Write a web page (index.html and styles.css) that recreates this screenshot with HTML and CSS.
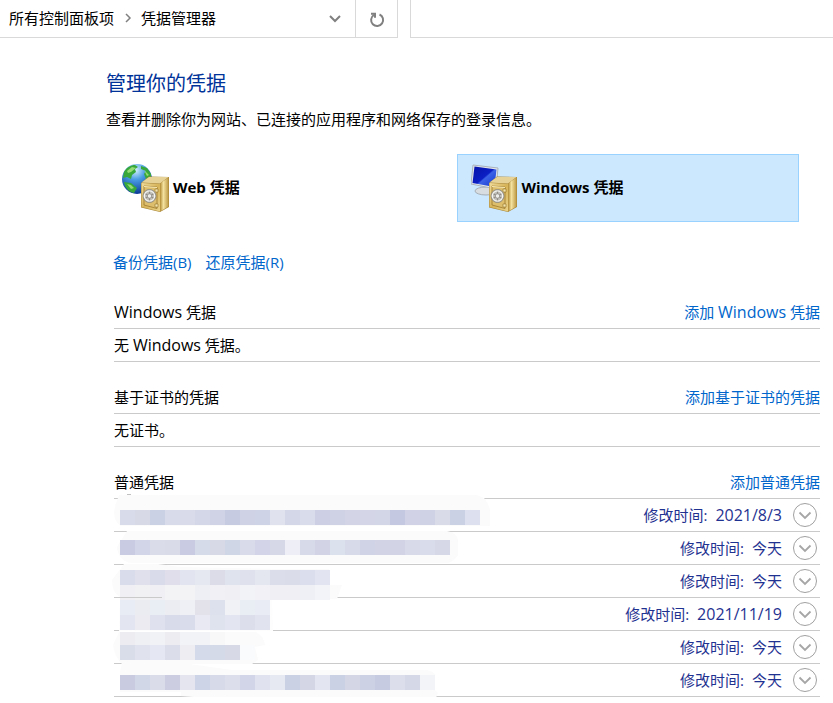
FILE: index.html
```html
<!DOCTYPE html>
<html lang="zh-CN">
<head>
<meta charset="utf-8">
<title>凭据管理器</title>
<link rel="stylesheet" href="styles.css">
</head>
<body>
<svg class="defs" width="0" height="0" aria-hidden="true">
  <defs>
    <linearGradient id="gold" x1="0" y1="0" x2="1" y2="1"><stop offset="0" stop-color="#f0dc9c"/><stop offset=".5" stop-color="#d6b358"/><stop offset="1" stop-color="#ead38a"/></linearGradient>
    <linearGradient id="goldSide" x1="0" y1="0" x2="1" y2="0"><stop offset="0" stop-color="#b18a32"/><stop offset=".4" stop-color="#f4e2a0"/><stop offset="1" stop-color="#bd9a44"/></linearGradient>
    <linearGradient id="screen" x1="0" y1="0" x2="1" y2="1"><stop offset="0" stop-color="#0713a8"/><stop offset=".5" stop-color="#0b1fc4"/><stop offset=".55" stop-color="#3b62e6"/><stop offset="1" stop-color="#1336d0"/></linearGradient>
    <radialGradient id="ocean" cx=".45" cy=".2" r=".8"><stop offset="0" stop-color="#d4f1fd"/><stop offset=".4" stop-color="#4a9de3"/><stop offset="1" stop-color="#0b3a96"/></radialGradient>
    <symbol id="safe" viewBox="0 0 30 38">
      <path d="M1 8 9 1.500 29 2v30l-9 5L1 32.500z" fill="#a88638"/>
      <path d="M1.500 7.500 9 2h19.500L20 8.500z" fill="#e6d297"/>
      <path d="M20 8.500 28.500 2.500v29L20 36.500z" fill="url(#goldSide)"/>
      <path d="M1.500 8 20 9v27.500L1.500 32z" fill="url(#gold)"/>
      <path d="M4 11 17 12v21.500L4 30z" fill="#dcbe6c" stroke="#9d7a2e" stroke-width=".8"/>
      <path d="M4 11.500 17 12.500" stroke="#f8e9b3" fill="none"/>
      <path d="M15 14h3v3h-3zM15 29h3v3h-3z" fill="#f3e3a8" stroke="#80601f" stroke-width=".5"/>
      <circle cx="9.500" cy="21" r="6.500" fill="#c2c1bc" stroke="#85837e" stroke-width=".8"/>
      <path d="M9.500 15v12M4 18l11 6M15 18l-11 6" stroke="#8f8b84" stroke-width="1.200"/>
      <circle cx="9.500" cy="21" r="5.200" fill="none" stroke="#f5f5f2" stroke-width="1.200"/>
      <circle cx="9.500" cy="21" r="2.200" fill="#eeeeec" stroke="#8c8983" stroke-width=".7"/>
    </symbol>
    <symbol id="expand" viewBox="0 0 24 24"><circle cx="12" cy="12" r="11.500" fill="#fff" stroke="#a0a0a0"/><path d="m6.500 9.500 5.500 5.500 5.500-5.500" fill="none" stroke="#a6a6a6" stroke-width="1.800"/></symbol>
  </defs>
</svg>
<header class="topbar">
  <nav class="address" aria-label="地址">
    <a href="#">所有控制面板项</a>
    <svg class="sep" width="8" height="12" viewBox="0 0 8 12"><path d="m2 2 4 4-4 4"/></svg>
    <a href="#">凭据管理器</a>
    <button class="drop" aria-label="以前的位置"><svg width="14" height="10" viewBox="0 0 14 10"><path d="m2 2 5 5 5-5"/></svg></button>
    <button class="refresh" aria-label="刷新"><svg width="16" height="18" viewBox="0 0 16 18"><path d="M10.500 4.500A6 6 0 1 1 4.800 5M2 3.800h4v4"/></svg></button>
  </nav>
  <input class="search" type="search" aria-label="搜索控制面板">
</header>
<main class="page">
  <h1>管理你的凭据</h1>
  <p class="intro">查看并删除你为网站、已连接的应用程序和网络保存的登录信息。</p>
  <div class="vaults">
    <button class="vault">
      <svg width="50" height="52" viewBox="0 0 50 52">
        <circle cx="17" cy="17" r="15" fill="url(#ocean)"/>
        <path d="M4 10C7 5 11 3 15 3l3 2-3 2 1 3-4 3-1 4-4-2-4 1zM4 20l7 1 6 5-3 5C9 30 5 26 4 20zM21 4l6 2 4 6v7l-5-2-2-5 2-3-5-2z" fill="#38a83b"/>
        <path d="M7 9 12 5l4 1-5 4-3 1zM24 8l5 5-2 1zM7 22l4 1 3 3-3 1z" fill="#95dc75"/>
        <use href="#safe" x="20" y="13" width="30" height="38"/>
      </svg>
      <span>Web 凭据</span>
    </button>
    <button class="vault selected">
      <svg width="48" height="52" viewBox="1 0 48 52">
        <path d="M13 24h8l1 5h-8z" fill="#aab1b8"/><ellipse cx="16" cy="29" rx="11" ry="4" fill="#d8dde1" stroke="#a7afb6"/>
        <path d="m3 3 25 3-2 21L1 22z" fill="#e4e8eb" stroke="#a9b3bd"/>
        <path d="m4.500 4.500 22 3-2 17.500L2.500 21z" fill="url(#screen)"/>
        <use href="#safe" x="18" y="13" width="30" height="38"/>
      </svg>
      <span>Windows 凭据</span>
    </button>
  </div>
  <div class="actions"><a href="#">备份凭据(B)</a><a href="#">还原凭据(R)</a></div>
  <section>
    <div class="head"><h2><span class="latin">Windows</span> 凭据</h2><a href="#">添加 <span class="latin">Windows</span> 凭据</a></div>
    <p class="empty">无 <span class="latin">Windows</span> 凭据。</p>
  </section>
  <section>
    <div class="head"><h2>基于证书的凭据</h2><a href="#">添加基于证书的凭据</a></div>
    <p class="empty">无证书。</p>
  </section>
  <section class="generic">
    <div class="head"><h2>普通凭据</h2><a href="#">添加普通凭据</a></div>
    <ul>
      <li><span>修改时间:</span><span class="latin">2021/8/3</span><button aria-label="展开"><svg width="24" height="24"><use href="#expand"/></svg></button></li>
      <li><span>修改时间:</span><span>今天</span><button aria-label="展开"><svg width="24" height="24"><use href="#expand"/></svg></button></li>
      <li><span>修改时间:</span><span>今天</span><button aria-label="展开"><svg width="24" height="24"><use href="#expand"/></svg></button></li>
      <li><span>修改时间:</span><span class="latin">2021/11/19</span><button aria-label="展开"><svg width="24" height="24"><use href="#expand"/></svg></button></li>
      <li><span>修改时间:</span><span>今天</span><button aria-label="展开"><svg width="24" height="24"><use href="#expand"/></svg></button></li>
      <li><span>修改时间:</span><span>今天</span><button aria-label="展开"><svg width="24" height="24"><use href="#expand"/></svg></button></li>
    </ul>
    <svg class="mosaic" width="380" height="213" viewBox="112 490 380 213" aria-hidden="true"></svg>
  </section>
</main>
<script src="mosaic.js"></script>
</body>
</html>
```
FILE: styles.css
```css
* { box-sizing: border-box; }
body {
  margin: 0;
  background: #fff;
  color: #000;
  font: 15px/20px "Open Sans", "Noto Sans CJK SC", sans-serif;
}
h1, h2, p, ul { margin: 0; padding: 0; font-weight: 400; }
a { color: #0066cc; text-decoration: none; }
button { border: 0; padding: 0; background: none; font: inherit; color: inherit; }
button svg { display: block; }
.defs { position: absolute; }
.latin { font-size: 16px; }

.topbar { display: flex; gap: 12px; height: 38px; }
.address {
  display: flex;
  align-items: center;
  width: 398px;
  padding-left: 9px;
  border: solid #d9d9d9;
  border-width: 0 1px 1px 0;
}
.address a { color: #000; padding-bottom: 2px; }
.sep { margin: 0 9px 2px 10px; }
.address path { fill: none; stroke: #808080; stroke-width: 2; }
.address .sep path { stroke-width: 1.5; }
.drop { margin-left: auto; padding: 0 13px; }
.refresh { align-self: stretch; width: 42px; padding-left: 13px; border-left: 1px solid #d9d9d9; }
.search { flex: 1; min-width: 0; border: solid #d9d9d9; border-width: 0 0 1px 1px; padding: 0 8px; font: inherit; outline: 0; }

.page { padding: 32px 13px 0 106px; }
h1 { font-size: 20px; line-height: 28px; color: #003399; }
.intro { margin-top: 11px; }
.vaults { display: flex; gap: 8px; margin: 25px 21px 0 0; }
.vault {
  display: flex;
  flex: 1;
  align-items: center;
  gap: 3px;
  height: 68px;
  padding-left: 13px;
  border: 1px solid transparent;
  font-weight: 700;
}
.vault span { padding-bottom: 2px; }
.selected { background: #cce8ff; border-color: #99d1ff; }
.actions { display: flex; gap: 14px; margin: 30px 0 0 7px; }
section { margin: 20px 0 0 8px; }
.actions + section { margin-top: 30px; }
.head { display: flex; justify-content: space-between; height: 27px; border-bottom: 1px solid #cacaca; }
h2 { font-size: 15px; line-height: 20px; }
.empty { height: 33px; padding: 6px 0; border-bottom: 1px solid #cacaca; }
section + section { margin-top: 25px; }
.generic { position: relative; }
ul { list-style: none; }
li {
  display: flex;
  align-items: center;
  justify-content: flex-end;
  gap: 8px;
  height: 33px;
  padding-right: 3px;
  border-bottom: 1px solid #cacaca;
  color: #1f3291;
}
li button { margin-left: 3px; }
.mosaic { position: absolute; left: -2px; bottom: -6px; }
```
FILE: mosaic.js
```js
const NS = 'http://www.w3.org/2000/svg';
const svg = document.querySelector('.mosaic');
const smears = [
  ['#fbfbfb', 'M119 495h358l7 3q4 4 6 12v16H121q-12-8-3-28z'],
  ['#fbfbfb', 'M127 531h320q10 2 11 9v15q-5 8-12 8H130q-12-3-13-16z'],
  ['#fbfbfb', 'M124 564h34l22 3 100 2h49v16h13l-5 14H162v-2h-42q-8-4-8-17z'],
  ['#fdfdfd', 'M162 597h110l1 34H119l1-31h42z'],
  ['#fbfbfb', 'M119 632h137q8 4 9 13l-10 2 3 13-6 4H122q-8-8-9-19z'],
  ['#fbfbfb', 'M122 663h60l50 7h195q8 2 8 5v15l3 3-3 7H230l-49-4v-4h-61v-20z']
];
const rows = [
  [510, 15, 'd8dbea d8d9e6 cbd1e5 d8dbea d9dbeb d4d7e7 d0d2e5 c7cbe1 cfd2e5 ced3e5 e0e2ee d4d7e7 d9dcea cdd0e4 cfd1e5 d3d5e7 d4d5e6 d2d6e7 c4c8e0 d1d2e5 ced2e4 dadbe9 cbd1e5 dde1ef'],
  [540, 15, 'c8cbe2 d2d4e7 dbdcea d9dbe9 c8cbe1 d5dbe9 d8d9e6 cfd6e6 d9dbea d3d4e7 d6d8e7 eeeef7 d7dae9 d2d3e5 dbe1ed d7dae8 d0d2e6 d2d4e6 d2d4e6 d8dae9 d9dceb d6d8e8'],
  [570, 15, 'd9dceb dfe0ec d9dbea dfdeea e2e4f0 e6e8f1 dbdce8 dfe3ee dfe1ed e4e6f0 dbddea dadcea dbdeed e2e4f1'],
  [585, 15, 'f0f0f4 f1f1f4 f0f0f4 f3f3f6 f3f3f6 eeeff4 f1f1f5 f0f0f4 f2f3f6 f2f2f6 f0f0f4 efeff4 eff0f5 f3f4f8'],
  [600, 15, 'e8ecf4 ebecf1 e9edf4 ebedf2 eff0f5 e3e2eb dce1ed f1f2f6 e9edf4 e9ecf4'],
  [615, 15, 'e3e6f0 ebebf1 dfe1ee d8dbe9 d9dcea e9e9f3 dee3ee e3e6f0 dcdeec e1e3ef'],
  [632, 13, 'ededf1 eff0f3 f1f2f5 ededf1 f2f3f6 f2f3f6 f8f8f9'],
  [645, 15, 'd9dce9 e0e2ee e5e8f2 dbddeb eeedf2 d4dae9 d5dae8 d7d9e6 fafbfd'],
  [675, 15, 'c9cce1 d2d7e8 dadde9 cdcde1 e5e5ef ced4e7 d6dae9 dddeeb d2d4e7 e0e2ef e6e8f2 cbd1e5 d4d6e5 e3e6f0 cbd1e5 d4d6e5 ccd1e4 c7cbe1 dddeeb d5d8e7 f3f4f8']
];
function add(tag, attrs) {
  const el = document.createElementNS(NS, tag);
  for (const key in attrs) el.setAttribute(key, attrs[key]);
  svg.append(el);
}
smears.forEach(([fill, d]) => add('path', { fill, d }));
rows.forEach(([y, height, colors]) => colors.split(' ').forEach((c, i) =>
  add('rect', { x: 120 + i * 15, y, width: 15, height, fill: '#' + c })));
add('rect', { x: 114, y: 597, width: 48, height: 1, fill: '#cacaca' });
add('rect', { x: 127, y: 494, width: 4, height: 1, fill: '#c0c0c0' });
```
